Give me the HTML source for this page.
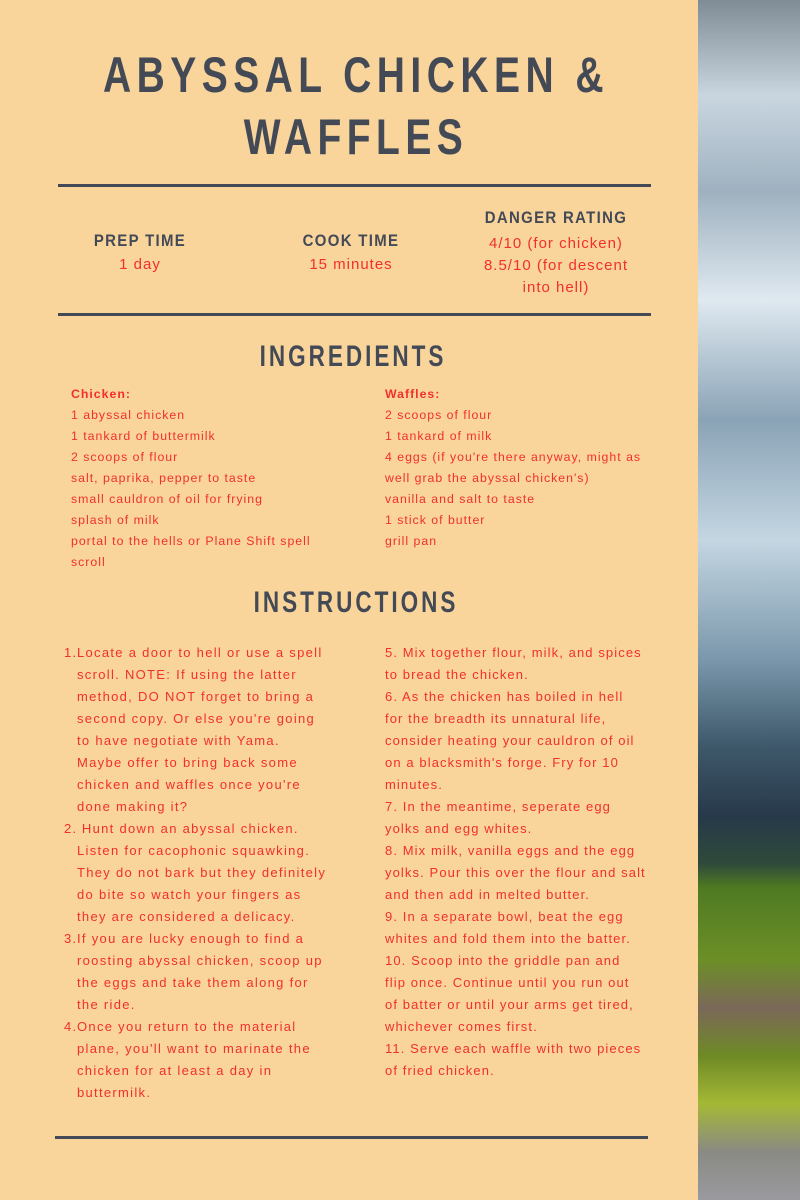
<!DOCTYPE html>
<html><head><meta charset="utf-8"><style>
*{margin:0;padding:0;box-sizing:border-box}
body{width:800px;height:1200px;overflow:hidden;background:#f9d49b;position:relative;font-family:"Liberation Sans",sans-serif}
.side{position:absolute;left:698px;top:0;width:102px;height:1200px;
background:linear-gradient(180deg,#7f8c96 0%,#c9d6e0 8%,#9fb1c0 16%,#dfe9f0 25%,#8aa3b6 35%,#c4d6e2 45%,#7a97ab 55%,#3f5a6c 62%,#27394a 68%,#2f4a3a 72%,#4f7a22 74%,#6c8f27 80%,#7b6858 84%,#6e8a25 88%,#a5b836 92%,#8a8a84 96%,#9a9aa0 100%)}
.d{color:#434a56;font-weight:bold;position:absolute;text-align:center;white-space:nowrap}
.r{color:#f2302a;position:absolute;white-space:nowrap;letter-spacing:1px}
.line{position:absolute;height:3px;background:#434a56}
.ing{position:absolute;font-size:12.3px;line-height:21px;color:#f2302a;letter-spacing:1px}
.ins{position:absolute;font-size:13px;line-height:22px;color:#f2302a;letter-spacing:1.3px}
</style></head><body>
<div class="side"></div>
<div class="d" style="left:0;width:712px;top:44px;font-size:50px;letter-spacing:7px;line-height:62px;transform:scaleX(0.78)">ABYSSAL CHICKEN &amp;<br>WAFFLES</div>
<div class="line" style="left:58px;top:184px;width:593px"></div>
<div class="d" style="left:40px;width:200px;top:231px;font-size:17px;letter-spacing:1.5px;transform:scaleX(0.88)">PREP TIME</div>
<div class="r" style="left:40px;width:200px;text-align:center;top:256px;font-size:15px">1 day</div>
<div class="d" style="left:251px;width:200px;top:231px;font-size:17px;letter-spacing:1.5px;transform:scaleX(0.88)">COOK TIME</div>
<div class="r" style="left:251px;width:200px;text-align:center;top:256px;font-size:15px">15 minutes</div>
<div class="d" style="left:456px;width:200px;top:208px;font-size:17px;letter-spacing:1.5px;transform:scaleX(0.88)">DANGER RATING</div>
<div class="r" style="left:456px;width:200px;text-align:center;top:233px;font-size:15px;line-height:22px;white-space:normal">4/10 (for chicken)<br>8.5/10 (for descent<br>into hell)</div>
<div class="line" style="left:58px;top:313px;width:593px"></div>
<div class="d" style="left:0;width:706px;top:340px;font-size:30px;letter-spacing:4px;transform:scaleX(0.75)">INGREDIENTS</div>
<div class="ing" style="left:71px;top:384px;width:290px"><b>Chicken:</b><br>1 abyssal chicken<br>1 tankard of buttermilk<br>2 scoops of flour<br>salt, paprika, pepper to taste<br>small cauldron of oil for frying<br>splash of milk<br>portal to the hells or Plane Shift spell<br>scroll</div>
<div class="ing" style="left:385px;top:384px;width:300px"><b>Waffles:</b><br>2 scoops of flour<br>1 tankard of milk<br>4 eggs (if you're there anyway, might as<br>well grab the abyssal chicken's)<br>vanilla and salt to taste<br>1 stick of butter<br>grill pan</div>
<div class="d" style="left:0;width:712px;top:586px;font-size:30px;letter-spacing:4px;transform:scaleX(0.75)">INSTRUCTIONS</div>
<div class="ins" style="left:64px;top:642px;width:300px;white-space:nowrap">
<div style="position:relative;padding-left:13px"><span style="position:absolute;left:0">1.</span>Locate a door to hell or use a spell<br>scroll. NOTE: If using the latter<br>method, DO NOT forget to bring a<br>second copy. Or else you're going<br>to have negotiate with Yama.<br>Maybe offer to bring back some<br>chicken and waffles once you're<br>done making it?</div>
<div style="position:relative;padding-left:13px"><span style="position:absolute;left:0">2.</span>&nbsp;Hunt down an abyssal chicken.<br>Listen for cacophonic squawking.<br>They do not bark but they definitely<br>do bite so watch your fingers as<br>they are considered a delicacy.</div>
<div style="position:relative;padding-left:13px"><span style="position:absolute;left:0">3.</span>If you are lucky enough to find a<br>roosting abyssal chicken, scoop up<br>the eggs and take them along for<br>the ride.</div>
<div style="position:relative;padding-left:13px"><span style="position:absolute;left:0">4.</span>Once you return to the material<br>plane, you'll want to marinate the<br>chicken for at least a day in<br>buttermilk.</div>
</div>
<div class="ins" style="left:385px;top:642px;width:310px;white-space:nowrap;letter-spacing:1.1px">5. Mix together flour, milk, and spices<br>to bread the chicken.<br>6. As the chicken has boiled in hell<br>for the breadth its unnatural life,<br>consider heating your cauldron of oil<br>on a blacksmith's forge. Fry for 10<br>minutes.<br>7. In the meantime, seperate egg<br>yolks and egg whites.<br>8. Mix milk, vanilla eggs and the egg<br>yolks. Pour this over the flour and salt<br>and then add in melted butter.<br>9. In a separate bowl, beat the egg<br>whites and fold them into the batter.<br>10. Scoop into the griddle pan and<br>flip once. Continue until you run out<br>of batter or until your arms get tired,<br>whichever comes first.<br>11. Serve each waffle with two pieces<br>of fried chicken.</div>
<div class="line" style="left:55px;top:1136px;width:593px"></div>
</body></html>
